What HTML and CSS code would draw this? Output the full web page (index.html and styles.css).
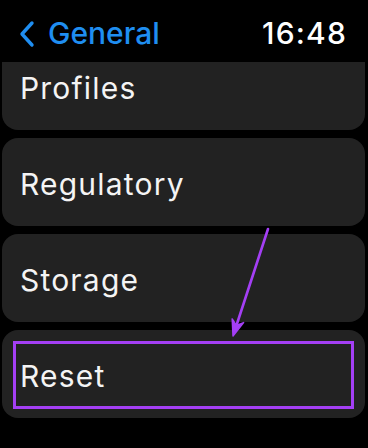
FILE: index.html
```html
<!doctype html>
<html>
<head>
    <meta charset="utf-8">
    <title>General</title>
    <link rel="stylesheet" href="styles.css">
</head>
<body>
<div class="screen">
    <div class="header">
        <div class="back">
            <svg class="chevron" width="18" height="28" viewBox="0 0 18 28">
                <polyline points="14,3 4,14 14,25" fill="none" stroke="#1f8ef1" stroke-width="3.4" stroke-linecap="round" stroke-linejoin="round"/>
            </svg>
            <span>General</span>
        </div>
        <div class="time">16:48</div>
    </div>
    <div class="list">
        <div class="row row-first"><span>Profiles</span></div>
        <div class="row"><span>Regulatory</span></div>
        <div class="row"><span>Storage</span></div>
        <div class="row"><span>Reset</span></div>
    </div>
    <div class="highlight"></div>
    <svg class="arrow" width="368" height="448" viewBox="0 0 368 448">
        <line x1="268" y1="229" x2="236.6" y2="325" stroke="#a43ff5" stroke-width="2.6" stroke-linecap="round"/>
        <polygon points="233,336 243.6,322.6 236.4,325.5 232.2,319" fill="#a43ff5" stroke="#a43ff5" stroke-width="1.5" stroke-linejoin="round"/>
    </svg>
</div>
</body>
</html>
```

FILE: styles.css
```css
body {margin: 0; padding: 0; background: #000; font-family: 'Inter', 'Noto Sans', sans-serif;}
.screen {position: relative; width: 368px; height: 448px; overflow: hidden; background: #000;}
.header {height: 62px; box-sizing: border-box; padding: 15px 21px 0 18px; display: flex; justify-content: space-between; align-items: flex-start;}
.back {display: flex; align-items: center; color: #1f8ef1; font-size: 30px; line-height: 36px; font-weight: 500;}
.chevron {margin-right: 12px; margin-top: 2px;}
.time {color: #fff; font-size: 30px; line-height: 36px; font-weight: 500; letter-spacing: 1.2px;}
.list {height: 386px; overflow: hidden; padding: 0 3px 0 2px; display: flex; flex-direction: column; gap: 8px;}
.row {flex: none; height: 88px; box-sizing: border-box; padding: 3px 0 0 18px; background: #222; border-radius: 16px; display: flex; align-items: center; color: #f4f4f4; font-size: 30px; line-height: 36px; letter-spacing: 1.2px;}
.row-first {margin-top: -20px;}
.highlight {position: absolute; left: 13px; top: 341px; width: 341px; height: 68px; box-sizing: border-box; border: 3px solid #a43ff5;}
.arrow {position: absolute; left: 0; top: 0;}
```
